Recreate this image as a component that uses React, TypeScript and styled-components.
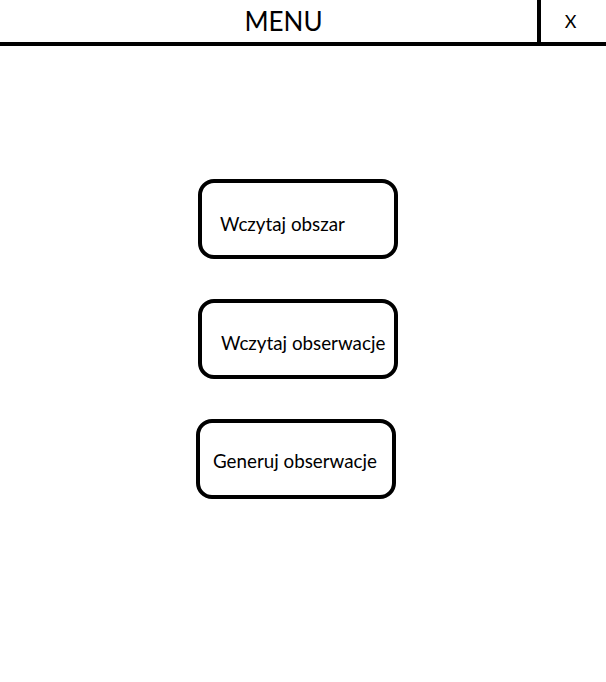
import * as React from 'react'
import styled, { createGlobalStyle } from 'styled-components'

type ButtonProps = {
    $indent: number
    $drop: number
    $shift?: number
}

const GlobalStyle = createGlobalStyle`
    html, body {
        margin: 0;
        padding: 0;
        background: #fff;
    }
    body {
        font-family: Lato, "Open Sans", sans-serif;
        color: #000;
    }
`
const Page = styled.div`
    width: 606px;
    height: 682px;
    background: #fff;
`
const Header = styled.header`
    display: flex;
    height: 42px;
    border-bottom: 4px solid #000;
`
const Title = styled.h1`
    width: 537px;
    margin: 0;
    padding-left: 30px;
    box-sizing: border-box;
    display: flex;
    align-items: center;
    justify-content: center;
    font-size: 26px;
    font-weight: 400;
`
const Close = styled.button`
    flex: 1;
    border: 0;
    border-left: 4px solid #000;
    background: transparent;
    padding: 0 6px 0 0;
    font-family: inherit;
    font-size: 18px;
    color: #000;
`
const Menu = styled.nav`
    display: flex;
    flex-direction: column;
    align-items: flex-start;
    gap: 40px;
    padding: 133px 0 0 198px;
`
const Item = styled.button<ButtonProps>`
    width: 200px;
    height: 80px;
    box-sizing: border-box;
    display: flex;
    align-items: center;
    margin-left: ${p => p.$shift ?? 0}px;
    padding: ${p => p.$drop}px 0 0 ${p => p.$indent}px;
    border: 4px solid #000;
    border-radius: 16px;
    background: #fff;
    font-family: inherit;
    font-size: 18.8px;
    color: #000;
    white-space: nowrap;
`

export default function App() {
    return (
        <Page>
            <GlobalStyle />
            <Header>
                <Title>MENU</Title>
                <Close>X</Close>
            </Header>
            <Menu>
                <Item $indent={18} $drop={8}>Wczytaj obszar</Item>
                <Item $indent={19} $drop={7}>Wczytaj obserwacje</Item>
                <Item $indent={13} $drop={2} $shift={-2}>Generuj obserwacje</Item>
            </Menu>
        </Page>
    )
}
